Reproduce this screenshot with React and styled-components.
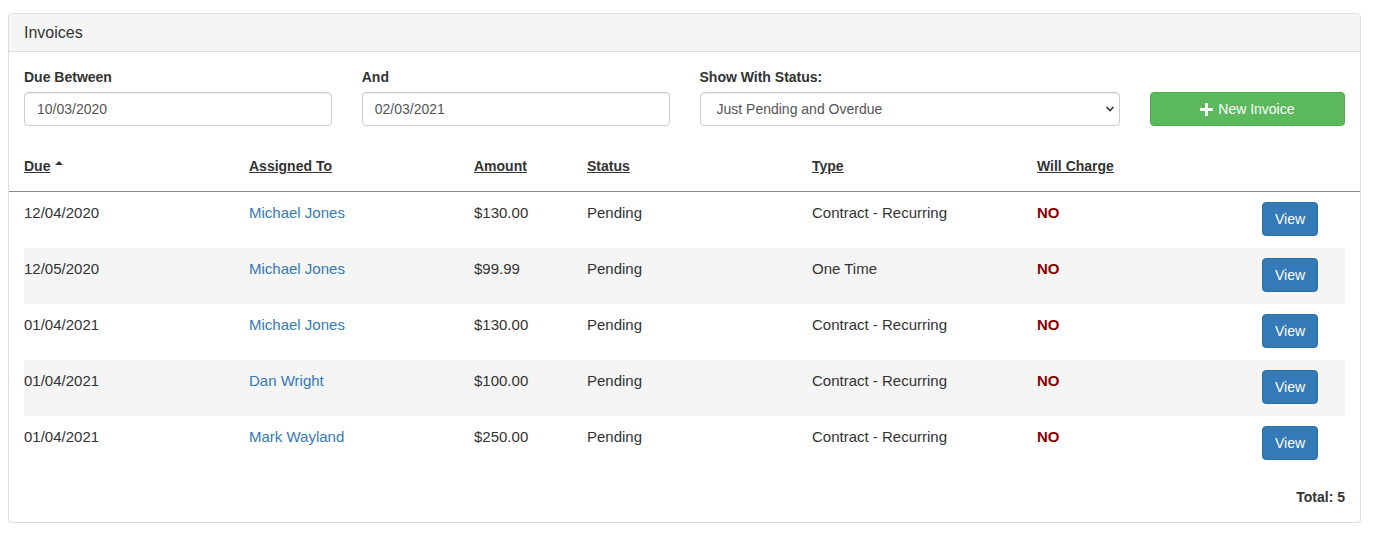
import React from "react";
import styled, { createGlobalStyle } from "styled-components";

const Global = createGlobalStyle`
  html, body { margin: 0; padding: 0; background: #fff; }
  body {
    font-family: "Liberation Sans", Arial, Helvetica, sans-serif;
    font-size: 14px;
    line-height: 20px;
    color: #333;
  }
  * { box-sizing: border-box; }
`;

const Page = styled.div`
  padding: 13px 19px 0 8px;
`;

const Panel = styled.section`
  width: 1353px;
  border: 1px solid #ddd;
  border-radius: 4px;
  background: #fff;
  box-shadow: 0 1px 1px rgba(0, 0, 0, 0.05);
`;

const PanelHeading = styled.header`
  background: #f5f5f5;
  border-bottom: 1px solid #ddd;
  border-radius: 3px 3px 0 0;
  padding: 10px 15px;
  font-size: 16px;
  line-height: 17px;
  color: #333;
`;

const PanelBody = styled.div`
  padding: 15px;
`;

const FilterRow = styled.div`
  display: flex;
  margin: 0 -15px 25px;
`;

const Field = styled.div`
  display: flex;
  flex-direction: column;
  padding: 0 15px;
  width: ${(p) => p.$w};
`;

const Label = styled.label`
  font-weight: bold;
  margin-bottom: 5px;
  min-height: 20px;
`;

const Input = styled.input`
  height: 34px;
  padding: 6px 12px;
  font: inherit;
  color: #555;
  border: 1px solid #ccc;
  border-radius: 4px;
  box-shadow: inset 0 1px 1px rgba(0, 0, 0, 0.075);
  background: #fff;
  width: 100%;
`;

const SelectWrap = styled.div`
  position: relative;
`;

const Select = styled.select`
  appearance: none;
  -webkit-appearance: none;
  height: 34px;
  width: 100%;
  padding: 6px 30px 6px 16px;
  font: inherit;
  color: #555;
  border: 1px solid #ccc;
  border-radius: 4px;
  box-shadow: inset 0 1px 1px rgba(0, 0, 0, 0.075);
  background: #fff;
`;

const Chevron = styled.svg`
  position: absolute;
  right: 5px;
  top: 13px;
  pointer-events: none;
`;

const SuccessButton = styled.button`
  margin-top: 25px;
  height: 34px;
  width: 100%;
  font: inherit;
  color: #fff;
  background: #5cb85c;
  border: 1px solid #4cae4c;
  border-radius: 4px;
  display: flex;
  align-items: center;
  justify-content: center;
  gap: 5px;
  cursor: pointer;
`;

const cols = "225px 225px 113px 225px 225px 225px 1fr";

const HeadRow = styled.div`
  display: grid;
  grid-template-columns: ${cols};
  margin: 0 -15px;
  padding: 0 15px 1px;
  border-bottom: 1px solid #888;
`;

const HeadCell = styled.div`
  padding: 5px 0 14px;
  font-weight: bold;
  text-decoration: underline;
  color: #333;
  display: flex;
  align-items: center;
  gap: 5px;
`;

const Caret = styled.span`
  display: inline-block;
  width: 0;
  height: 0;
  border-left: 4px solid transparent;
  border-right: 4px solid transparent;
  border-bottom: 4px solid #333;
  margin-top: -7px;
`;

const Row = styled.div`
  display: grid;
  grid-template-columns: ${cols};
  height: 56px;
  font-size: 15px;
  background: ${(p) => (p.$striped ? "#f5f5f5" : "#fff")};
`;

const Cell = styled.div`
  padding-top: 11px;
  color: #333;
`;

const LinkCell = styled(Cell)`
  color: #337ab7;
`;

const NoCell = styled(Cell)`
  color: #8b0000;
  font-weight: bold;
`;

const ActionCell = styled.div`
  padding-top: 10px;
`;

const PrimaryButton = styled.button`
  height: 34px;
  padding: 6px 12px;
  font-family: inherit;
  font-size: 14px;
  line-height: 20px;
  color: #fff;
  background: #337ab7;
  border: 1px solid #2e6da4;
  border-radius: 4px;
  cursor: pointer;
`;

const Total = styled.div`
  text-align: right;
  font-weight: bold;
  margin-top: 15px;
`;

const rows = [
  { due: "12/04/2020", who: "Michael Jones", amount: "$130.00", type: "Contract - Recurring" },
  { due: "12/05/2020", who: "Michael Jones", amount: "$99.99", type: "One Time" },
  { due: "01/04/2021", who: "Michael Jones", amount: "$130.00", type: "Contract - Recurring" },
  { due: "01/04/2021", who: "Dan Wright", amount: "$100.00", type: "Contract - Recurring" },
  { due: "01/04/2021", who: "Mark Wayland", amount: "$250.00", type: "Contract - Recurring" },
];

export default function App() {
  return (
    <Page>
      <Global />
      <Panel>
        <PanelHeading>Invoices</PanelHeading>
        <PanelBody>
          <FilterRow>
            <Field $w="25%">
              <Label>Due Between</Label>
              <Input defaultValue="10/03/2020" />
            </Field>
            <Field $w="25%">
              <Label>And</Label>
              <Input defaultValue="02/03/2021" />
            </Field>
            <Field $w="33.3333%">
              <Label>Show With Status:</Label>
              <SelectWrap>
                <Select defaultValue="po">
                  <option value="po">Just Pending and Overdue</option>
                  <option value="all">All</option>
                </Select>
                <Chevron width="10" height="8" viewBox="0 0 10 8">
                  <path d="M1.5 2 L5 5.5 L8.5 2" fill="none" stroke="#333" strokeWidth="1.6" />
                </Chevron>
              </SelectWrap>
            </Field>
            <Field $w="16.6667%">
              <SuccessButton>
                <svg width="13" height="13" viewBox="0 0 13 13">
                  <path d="M5 0h3v5h5v3H8v5H5V8H0V5h5z" fill="#fff" />
                </svg>
                New Invoice
              </SuccessButton>
            </Field>
          </FilterRow>
          <HeadRow>
            <HeadCell>
              Due <Caret />
            </HeadCell>
            <HeadCell>Assigned To</HeadCell>
            <HeadCell>Amount</HeadCell>
            <HeadCell>Status</HeadCell>
            <HeadCell>Type</HeadCell>
            <HeadCell>Will Charge</HeadCell>
            <HeadCell />
          </HeadRow>
          {rows.map((r, i) => (
            <Row key={i} $striped={i % 2 === 1}>
              <Cell>{r.due}</Cell>
              <LinkCell>{r.who}</LinkCell>
              <Cell>{r.amount}</Cell>
              <Cell>Pending</Cell>
              <Cell>{r.type}</Cell>
              <NoCell>NO</NoCell>
              <ActionCell>
                <PrimaryButton>View</PrimaryButton>
              </ActionCell>
            </Row>
          ))}
          <Total>Total: 5</Total>
        </PanelBody>
      </Panel>
    </Page>
  );
}
